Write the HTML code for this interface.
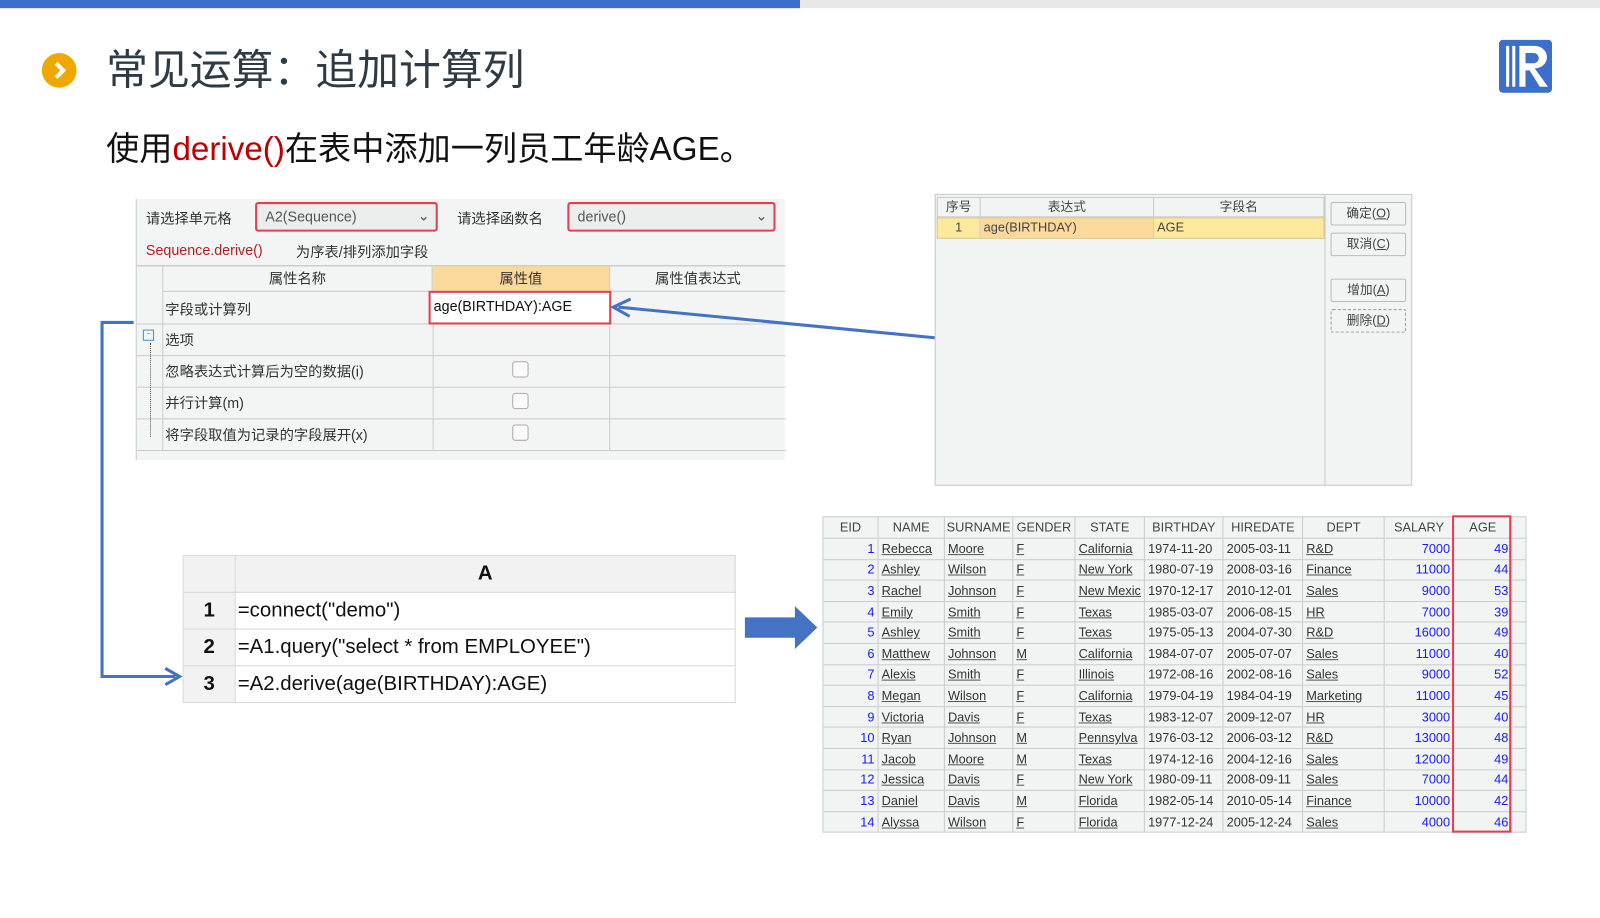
<!DOCTYPE html>
<html><head><meta charset="utf-8"><style>
*{margin:0;padding:0;box-sizing:border-box}
body{width:1600px;height:900px;background:#fff;position:relative;overflow:hidden;font-family:"Liberation Sans","Noto Sans CJK SC",sans-serif}
#w{position:absolute;left:0;top:0;width:1568px;height:882px;transform:scale(1.020408);transform-origin:0 0}
.a{position:absolute}
.ui{font-size:14px;color:#333}
table{border-collapse:collapse}
.dt{position:absolute;left:806px;top:506px;font-size:12.5px;background:#f2f3f3;font-family:"Liberation Sans",sans-serif}
.dt td{border:1px solid #c9cccd;height:20.6px;padding:0 3px;white-space:nowrap;overflow:hidden;color:#333}
.dt th{border:1px solid #c9cccd;height:21px;font-weight:normal;color:#444}
.dt td span{text-decoration:underline;text-decoration-color:#555}
.dt .n{text-align:right;color:#1a1aff}
.code{position:absolute;left:179px;top:544px;font-size:20px;font-family:"Liberation Sans","Noto Sans CJK SC",sans-serif}
.code td{border:1.5px solid #d8d8d8;height:36px;color:#111;padding:0}
</style></head><body><div id="w">
<div class="a" style="left:0;top:0;width:784px;height:8px;background:#3c6fca"></div>
<div class="a" style="left:784px;top:0;width:816px;height:8px;background:#e8e8e8"></div>
<div class="a" style="left:41px;top:52px;width:34px;height:34px;border-radius:50%;background:#f0a800"></div>
<svg class="a" style="left:41px;top:52px" width="34" height="34"><path d="M14 10 L21 17 L14 24" stroke="#fff" stroke-width="4" fill="none"/></svg>
<div class="a" style="left:104px;top:37px;font-size:41px;color:#2f3a42;font-family:'Noto Sans CJK SC',sans-serif;line-height:56px">常见运算：追加计算列</div>
<div class="a" style="left:104px;top:123px;font-size:32.5px;color:#111;font-family:'Liberation Sans','Noto Sans CJK SC',sans-serif;line-height:46px">使用<span style="color:#c00000">derive()</span>在表中添加一列员工年龄AGE。</div>
<svg class="a" style="left:1469px;top:39px" width="52" height="52"><rect x="0" y="0" width="52" height="52" rx="4" fill="#3c6fca"/><rect x="7" y="6" width="3" height="40" fill="#fff"/><rect x="13" y="6" width="3" height="40" fill="#fff"/><path d="M20 6 H35 A12 11 0 0 1 35 28 L48 46 H40 L30 30 H26 V46 H20 Z" fill="#fff"/><path d="M26 13 H34 A5 5 0 0 1 34 23 H26 Z" fill="#3c6fca"/></svg>

<div class="a ui" style="left:133px;top:195px;width:636px;height:256px;background:#f3f4f4;border-left:1px solid #ccc">
 <div class="a" style="left:9px;top:9px">请选择单元格</div>
 <div class="a" style="left:116px;top:3px;width:179px;height:29px;border:2px solid #e04050;border-radius:3px;background:#eceded;padding:4px 8px;color:#555">A2(Sequence)<span style="position:absolute;right:6px;top:3px">⌄</span></div>
 <div class="a" style="left:314px;top:9px">请选择函数名</div>
 <div class="a" style="left:422px;top:3px;width:204px;height:29px;border:2px solid #e04050;border-radius:3px;background:#eceded;padding:4px 8px;color:#555">derive()<span style="position:absolute;right:6px;top:3px">⌄</span></div>
 <div class="a" style="left:9px;top:42px;color:#b02020">Sequence.derive()</div>
 <div class="a" style="left:156px;top:42px">为序表/排列添加字段</div>
 <div class="a" style="left:0;top:65px;width:636px;height:180px;border-top:1px solid #bbb">
  <div class="a" style="left:0;top:0;width:26px;height:180px;border-right:1px solid #ccc"></div>
  <div class="a" style="left:26px;top:0;width:264px;height:25px;border-right:1px solid #ccc;border-bottom:1px solid #ccc;text-align:center;line-height:25px">属性名称</div>
  <div class="a" style="left:290px;top:0;width:173px;height:25px;background:#fbd99c;border-bottom:1px solid #ccc;text-align:center;line-height:25px">属性值</div>
  <div class="a" style="left:463px;top:0;width:173px;height:25px;border-left:1px solid #ccc;border-bottom:1px solid #ccc;text-align:center;line-height:25px">属性值表达式</div>
  <div class="a" style="left:290px;top:25px;width:1px;height:155px;background:#ccc"></div>
  <div class="a" style="left:463px;top:25px;width:1px;height:155px;background:#ccc"></div>
  <div class="a" style="left:0;top:56px;width:636px;height:1px;background:#ccc"></div>
  <div class="a" style="left:0;top:87px;width:636px;height:1px;background:#ccc"></div>
  <div class="a" style="left:0;top:118px;width:636px;height:1px;background:#ccc"></div>
  <div class="a" style="left:0;top:149px;width:636px;height:1px;background:#ccc"></div>
  <div class="a" style="left:0;top:180px;width:636px;height:1px;background:#ccc"></div>
  <div class="a" style="left:28px;top:32px">字段或计算列</div>
  <div class="a" style="left:286px;top:24px;width:179px;height:33px;border:2px solid #e04050;background:#fff;padding:5px 3px;color:#111">age(BIRTHDAY):AGE</div>
  <div class="a" style="left:6px;top:62px;width:11px;height:11px;border:1px solid #4a90c0;font-size:10px;line-height:8px;text-align:center;color:#4a90c0">-</div>
  <div class="a" style="left:28px;top:62px">选项</div>
  <div class="a" style="left:28px;top:93px">忽略表达式计算后为空的数据(i)</div>
  <div class="a" style="left:28px;top:124px">并行计算(m)</div>
  <div class="a" style="left:28px;top:155px">将字段取值为记录的字段展开(x)</div>
  <div class="a" style="left:368px;top:93px;width:16px;height:16px;border:1px solid #aaa;border-radius:3px;background:#fafafa"></div>
  <div class="a" style="left:368px;top:124px;width:16px;height:16px;border:1px solid #aaa;border-radius:3px;background:#fafafa"></div>
  <div class="a" style="left:368px;top:155px;width:16px;height:16px;border:1px solid #aaa;border-radius:3px;background:#fafafa"></div>
  <div class="a" style="left:13px;top:75px;width:1px;height:92px;border-left:1px dotted #555"></div>
 </div>
</div>

<div class="a" style="left:916px;top:190px;width:468px;height:286px;background:#f2f3f3;border:1px solid #c8c8c8;font-size:12.5px;color:#444">
 <div class="a" style="left:1px;top:2px;width:380px;height:20px;border:1px solid #c8c8c8;display:flex">
  <div style="width:42px;text-align:center;border-right:1px solid #c8c8c8;line-height:18px">序号</div>
  <div style="width:170px;text-align:center;border-right:1px solid #c8c8c8;line-height:18px">表达式</div>
  <div style="flex:1;text-align:center;line-height:18px">字段名</div>
 </div>
 <div class="a" style="left:1px;top:22px;width:380px;height:21px;border:1px solid #d8c890;display:flex;background:#fde99c">
  <div style="width:42px;text-align:center;line-height:19px;border-right:1px solid #ccc">1</div>
  <div style="width:170px;line-height:19px;padding-left:3px;background:#fbd99c;border-right:1px solid #ccc">age(BIRTHDAY)</div>
  <div style="flex:1;line-height:19px;padding-left:3px">AGE</div>
 </div>
 <div class="a" style="left:381px;top:0;width:1px;height:286px;background:#c8c8c8"></div>
 <div class="a" style="left:387px;top:7px;width:74px;height:23px;border:1px solid #bbb;border-radius:2px;text-align:center;line-height:21px">确定(<u>O</u>)</div>
 <div class="a" style="left:387px;top:37px;width:74px;height:23px;border:1px solid #bbb;border-radius:2px;text-align:center;line-height:21px">取消(<u>C</u>)</div>
 <div class="a" style="left:387px;top:82px;width:74px;height:23px;border:1px solid #bbb;border-radius:2px;text-align:center;line-height:21px">增加(<u>A</u>)</div>
 <div class="a" style="left:387px;top:112px;width:74px;height:23px;border:1px dashed #999;border-radius:2px;text-align:center;line-height:21px">删除(<u>D</u>)</div>
</div>

<svg class="a" style="left:0;top:0" width="1600" height="900">
 <path d="M916 331 L606 301" stroke="#4472c4" stroke-width="3" fill="none"/>
 <path d="M618 293 L601 301 L617 310" stroke="#4472c4" stroke-width="3" fill="none"/>
 <path d="M131 316 H100 V663 H172" stroke="#4472c4" stroke-width="3" fill="none"/>
 <path d="M162 655 L176 663 L162 671" stroke="#4472c4" stroke-width="3" fill="none"/>
 <path d="M730 605 H779 V594 L801 615 L779 636 V625 H730 Z" fill="#4472c4"/>
</svg>

<table class="code">
<tr style="background:#f2f2f2"><td style="width:51px;height:31px"></td><td style="width:490px;text-align:center;font-weight:bold">A</td></tr>
<tr><td style="background:#f2f2f2;text-align:center;font-weight:bold">1</td><td style="padding-left:2px">=connect("demo")</td></tr>
<tr><td style="background:#f2f2f2;text-align:center;font-weight:bold">2</td><td style="padding-left:2px">=A1.query("select * from EMPLOYEE")</td></tr>
<tr><td style="background:#f2f2f2;text-align:center;font-weight:bold">3</td><td style="padding-left:2px">=A2.derive(age(BIRTHDAY):AGE)</td></tr>
</table>

<table class="dt">
<tr><th style="width:54px">EID</th><th style="width:65px">NAME</th><th style="width:67px">SURNAME</th><th style="width:61px">GENDER</th><th style="width:67px">STATE</th><th style="width:77px">BIRTHDAY</th><th style="width:78px">HIREDATE</th><th style="width:80px">DEPT</th><th style="width:68px">SALARY</th><th style="width:57px">AGE</th><th style="width:14px"></th></tr>
<tr><td class="n">1</td><td><span>Rebecca</span></td><td><span>Moore</span></td><td><span>F</span></td><td><span>California</span></td><td>1974-11-20</td><td>2005-03-11</td><td><span>R&amp;D</span></td><td class="n">7000</td><td class="n">49</td><td></td></tr>
<tr><td class="n">2</td><td><span>Ashley</span></td><td><span>Wilson</span></td><td><span>F</span></td><td><span>New York</span></td><td>1980-07-19</td><td>2008-03-16</td><td><span>Finance</span></td><td class="n">11000</td><td class="n">44</td><td></td></tr>
<tr><td class="n">3</td><td><span>Rachel</span></td><td><span>Johnson</span></td><td><span>F</span></td><td><span>New Mexic</span></td><td>1970-12-17</td><td>2010-12-01</td><td><span>Sales</span></td><td class="n">9000</td><td class="n">53</td><td></td></tr>
<tr><td class="n">4</td><td><span>Emily</span></td><td><span>Smith</span></td><td><span>F</span></td><td><span>Texas</span></td><td>1985-03-07</td><td>2006-08-15</td><td><span>HR</span></td><td class="n">7000</td><td class="n">39</td><td></td></tr>
<tr><td class="n">5</td><td><span>Ashley</span></td><td><span>Smith</span></td><td><span>F</span></td><td><span>Texas</span></td><td>1975-05-13</td><td>2004-07-30</td><td><span>R&amp;D</span></td><td class="n">16000</td><td class="n">49</td><td></td></tr>
<tr><td class="n">6</td><td><span>Matthew</span></td><td><span>Johnson</span></td><td><span>M</span></td><td><span>California</span></td><td>1984-07-07</td><td>2005-07-07</td><td><span>Sales</span></td><td class="n">11000</td><td class="n">40</td><td></td></tr>
<tr><td class="n">7</td><td><span>Alexis</span></td><td><span>Smith</span></td><td><span>F</span></td><td><span>Illinois</span></td><td>1972-08-16</td><td>2002-08-16</td><td><span>Sales</span></td><td class="n">9000</td><td class="n">52</td><td></td></tr>
<tr><td class="n">8</td><td><span>Megan</span></td><td><span>Wilson</span></td><td><span>F</span></td><td><span>California</span></td><td>1979-04-19</td><td>1984-04-19</td><td><span>Marketing</span></td><td class="n">11000</td><td class="n">45</td><td></td></tr>
<tr><td class="n">9</td><td><span>Victoria</span></td><td><span>Davis</span></td><td><span>F</span></td><td><span>Texas</span></td><td>1983-12-07</td><td>2009-12-07</td><td><span>HR</span></td><td class="n">3000</td><td class="n">40</td><td></td></tr>
<tr><td class="n">10</td><td><span>Ryan</span></td><td><span>Johnson</span></td><td><span>M</span></td><td><span>Pennsylva</span></td><td>1976-03-12</td><td>2006-03-12</td><td><span>R&amp;D</span></td><td class="n">13000</td><td class="n">48</td><td></td></tr>
<tr><td class="n">11</td><td><span>Jacob</span></td><td><span>Moore</span></td><td><span>M</span></td><td><span>Texas</span></td><td>1974-12-16</td><td>2004-12-16</td><td><span>Sales</span></td><td class="n">12000</td><td class="n">49</td><td></td></tr>
<tr><td class="n">12</td><td><span>Jessica</span></td><td><span>Davis</span></td><td><span>F</span></td><td><span>New York</span></td><td>1980-09-11</td><td>2008-09-11</td><td><span>Sales</span></td><td class="n">7000</td><td class="n">44</td><td></td></tr>
<tr><td class="n">13</td><td><span>Daniel</span></td><td><span>Davis</span></td><td><span>M</span></td><td><span>Florida</span></td><td>1982-05-14</td><td>2010-05-14</td><td><span>Finance</span></td><td class="n">10000</td><td class="n">42</td><td></td></tr>
<tr><td class="n">14</td><td><span>Alyssa</span></td><td><span>Wilson</span></td><td><span>F</span></td><td><span>Florida</span></td><td>1977-12-24</td><td>2005-12-24</td><td><span>Sales</span></td><td class="n">4000</td><td class="n">46</td><td></td></tr>
</table>
<div class="a" style="left:1423px;top:505px;width:58px;height:311px;border:2px solid #e04050"></div>
</div></body></html>
